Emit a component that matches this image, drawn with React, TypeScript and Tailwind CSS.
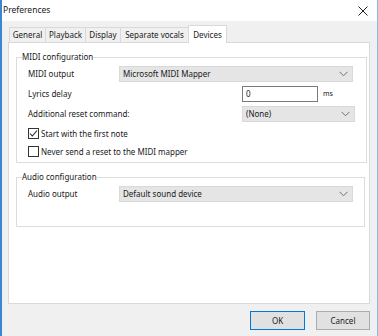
import React from "react";

const font = { fontFamily: '"Noto Sans", "Open Sans", sans-serif' };

function Chevron() {
  return (
    <svg width="9" height="6" viewBox="0 0 9 6" className="shrink-0">
      <path d="M0.5 0.8 L4.5 4.8 L8.5 0.8" fill="none" stroke="#707070" strokeWidth="1" />
    </svg>
  );
}

function Combo({ text, className }: { text: string; className: string }) {
  return (
    <div
      className={`flex items-center justify-between h-[16px] bg-[#e5e5e5] border border-[#d9d9d9] pl-[3px] pr-[4px] ${className}`}
    >
      <span className="leading-none">{text}</span>
      <Chevron />
    </div>
  );
}

function Check({ checked }: { checked: boolean }) {
  return (
    <div className="w-[11px] h-[11px] border border-[#333] bg-white flex items-center justify-center shrink-0">
      {checked && (
        <svg width="9" height="9" viewBox="0 0 9 9">
          <path d="M1 4.5 L3.3 7 L8 1.5" fill="none" stroke="#222" strokeWidth="1.1" />
        </svg>
      )}
    </div>
  );
}

export default function App() {
  const tabs = [
    { t: "General", w: 36 },
    { t: "Playback", w: 40 },
    { t: "Display", w: 35 },
    { t: "Separate vocals", w: 68 },
  ];
  return (
    <div
      className="w-[378px] h-[336px] bg-[#f0f0f0] border-l-2 border-l-[#3a86d4] border-r border-r-[#8cb8e4] text-[8px] text-[#1a1a1a] flex flex-col overflow-hidden"
      style={font}
    >
      {/* Title bar */}
      <div className="h-[21px] bg-white flex items-center justify-between pl-[1px] pr-[9px] shrink-0">
        <span className="text-[8.5px]">Preferences</span>
        <svg width="10" height="10" viewBox="0 0 10 10">
          <path d="M0.5 0.5 L9.5 9.5 M9.5 0.5 L0.5 9.5" stroke="#222" strokeWidth="1" />
        </svg>
      </div>

      {/* Tabs */}
      <div className="flex items-end h-[20px] pl-[7px] mt-[1px] shrink-0">
        {tabs.map((x) => (
          <div
            key={x.t}
            className="h-[15px] border-t border-l border-[#d9d9d9] bg-[#f0f0f0] flex items-center justify-center last:border-r"
            style={{ width: x.w }}
          >
            {x.t}
          </div>
        ))}
        <div className="w-[39px] h-[18px] -mb-[1px] bg-white border border-b-0 border-[#d9d9d9] flex items-center justify-center relative">
          Devices
        </div>
      </div>

      {/* Panel */}
      <div className="ml-[6px] w-[362px] h-[262px] bg-white border border-[#d9d9d9] flex flex-col pt-[8px] pl-[7px] shrink-0">
        <fieldset className="w-[346px] h-[112px] border border-[#dcdcdc] px-[11px] pt-0 pb-0">
          <legend className="ml-[-6px] px-[0px] leading-[12px]">MIDI configuration</legend>
          <div className="flex items-center h-[16px] mt-[3px]">
            <span className="w-[91px]">MIDI output</span>
            <Combo text="Microsoft MIDI Mapper" className="w-[234px]" />
          </div>
          <div className="flex items-center h-[16px] mt-[4px]">
            <span className="w-[214px]">Lyrics delay</span>
            <div className="w-[76px] h-[16px] border border-[#7a7a7a] bg-white pl-[3px] flex items-center leading-none">
              0
            </div>
            <span className="ml-[5px] text-[7px]">ms</span>
          </div>
          <div className="flex items-center h-[16px] mt-[4px]">
            <span className="w-[214px]">Additional reset command:</span>
            <Combo text="(None)" className="w-[113px]" />
          </div>
          <div className="flex items-center h-[11px] mt-[6px] gap-[2px]">
            <Check checked />
            <span>Start with the first note</span>
          </div>
          <div className="flex items-center h-[11px] mt-[7px] gap-[2px]">
            <Check checked={false} />
            <span>Never send a reset to the MIDI mapper</span>
          </div>
        </fieldset>

        <fieldset className="w-[346px] h-[56px] border border-[#dcdcdc] px-[11px] pt-0 pb-0 mt-[8px]">
          <legend className="ml-[-6px] px-[0px] leading-[12px]">Audio configuration</legend>
          <div className="flex items-center h-[16px] mt-[3px]">
            <span className="w-[91px]">Audio output</span>
            <Combo text="Default sound device" className="w-[234px]" />
          </div>
        </fieldset>
      </div>

      {/* Buttons */}
      <div className="flex justify-end gap-[11px] pr-[7px] mt-[7px]">
        <button className="w-[55px] h-[19px] bg-[#e1e1e1] border border-[#0078d7] flex items-center justify-center text-[8px]">
          OK
        </button>
        <button className="w-[54px] h-[19px] bg-[#e1e1e1] border border-[#adadad] flex items-center justify-center text-[8px]">
          Cancel
        </button>
      </div>
    </div>
  );
}
